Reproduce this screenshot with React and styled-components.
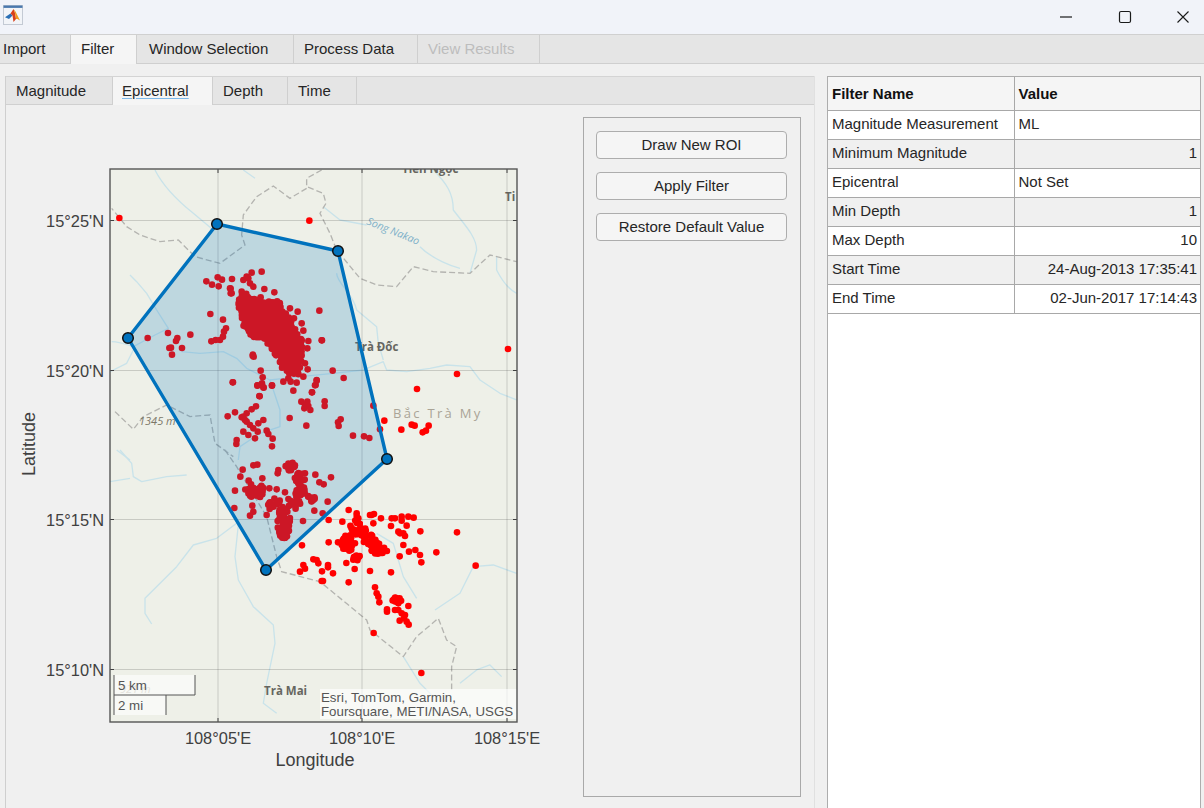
import React from "react";
import styled, { createGlobalStyle } from "styled-components";

const Global = createGlobalStyle`
  html, body { margin: 0; padding: 0; background: #f0f0f0; overflow: hidden; }
  * { box-sizing: border-box; }
  body { font-family: "Liberation Sans", Arial, sans-serif; }
`;

const Window = styled.div`
  width: 1204px; height: 808px; display: flex; flex-direction: column; overflow: hidden;
  background: #f0f0f0; color: #262626; font-size: 15px;
`;
const TitleBar = styled.header`
  height: 35px; flex: none; display: flex; align-items: flex-start; justify-content: space-between;
  background: #f1f3f9; border-bottom: 1px solid #d0d0d0; padding: 5px 0 0 3px;
`;
const Controls = styled.div`display: flex; align-items: center; gap: 16.5px; margin-top: -5px;`;
const ControlButton = styled.div`
  width: 42px; height: 33px; display: flex; align-items: center; justify-content: center; color: #1a1a1a;
`;
const MainTabs = styled.nav`
  height: 29px; flex: none; display: flex; background: #e5e5e5; border-bottom: 1px solid #cfcfcf;
`;
const MainTab = styled.div`
  width: ${p => p.$w}px; height: 29px; padding-left: ${p => p.$pad}px; line-height: 27px; white-space: nowrap;
  background: ${p => (p.$active ? "#f5f5f5" : "#e5e5e5")};
  color: ${p => (p.$disabled ? "#bdbdbd" : "#262626")};
  border-right: 1px solid #cfcfcf;
  border-bottom: ${p => (p.$active ? "none" : "1px solid #cfcfcf")};
`;
const Content = styled.main`
  flex: 1; min-height: 0; display: flex; gap: 12px; padding: 12px 3px 0 5px;
`;
const LeftPanel = styled.section`
  width: 810px; flex: none; display: flex; flex-direction: column;
  border-left: 1px solid #cfcfcf; border-right: 1px solid #e0e0e0;
`;
const SubTabs = styled.div`
  height: 29px; flex: none; display: flex; background: #e5e5e5; border-top: 1px solid #d4d4d4; border-bottom: 1px solid #d0d0d0;
`;
const SubTab = styled.div`
  width: ${p => p.$w}px; height: 28px; padding-left: ${p => p.$pad}px; line-height: 27px;
  background: ${p => (p.$active ? "#f5f5f5" : "#e5e5e5")};
  border-right: 1px solid #cfcfcf;
  border-bottom: ${p => (p.$active ? "none" : "1px solid #d0d0d0")};
`;
const FocusLabel = styled.span`
  text-decoration: underline; text-decoration-color: #7db9ea; text-underline-offset: 2px;
`;
const PanelBody = styled.div`
  flex: 1; min-height: 0; display: flex; justify-content: space-between; padding: 12px 13px 11px 0;
`;
const ChartSvg = styled.svg`display: block; flex: none; width: 577px; height: 680px;`;
const ButtonPanel = styled.aside`
  width: 218px; flex: none; display: flex; flex-direction: column; gap: 13px;
  border: 1px solid #a9a9a9; padding: 13px 13px 0 12px;
`;
const ActionButton = styled.button`
  height: 28px; width: 191px; padding: 0 0 1px; font: 15px "Liberation Sans", Arial, sans-serif; color: #262626;
  background: #f5f5f5; border: 1px solid #adadad; border-radius: 4px;
`;
const TableWrap = styled.section`
  width: 374px; flex: none; height: 100%; background: #fff; border: 1px solid #adadad; border-bottom: none;
`;
const Table = styled.table`
  width: 100%; border-collapse: collapse; table-layout: fixed;
`;
const Th = styled.th`
  height: 33px; padding: 0 4px; text-align: left; font-weight: bold; font-size: 15px; color: #111;
  background: #f5f5f5; border: 1px solid #a8a8a8; border-width: 0 1px 1px 0;
  &:last-child { border-right: none; }
`;
const Td = styled.td`
  height: 29px; padding: 0 3px 2px 4px; white-space: nowrap; font-size: 15px; color: #262626;
  text-align: ${p => (p.$right ? "right" : "left")};
  background: ${p => (p.$alt ? "#f0f0f0" : "#fff")};
  border: 1px solid #a8a8a8; border-width: 0 1px 1px 0;
  &:last-child { border-right: none; }
`;

const Box = styled.rect`fill: none; stroke: #555; stroke-width: 1.4;`;
const MapBg = styled.rect`fill: #eef0e8;`;
const River = styled.path`fill: none; stroke: #c9e3ea; stroke-width: 4; stroke-linejoin: round;`;
const Border = styled.path`fill: none; stroke: #b4b4b0; stroke-width: 4; stroke-dasharray: 18 9;`;
const Grid = styled.line`stroke: rgba(50, 50, 50, 0.2); stroke-width: 1;`;
const Tick = styled.line`stroke: #404040; stroke-width: 1;`;
const TickLabel = styled.text`font: 16.4px "Liberation Sans", Arial, sans-serif; fill: #404040;`;
const AxisLabel = styled.text`font: 18px "Liberation Sans", Arial, sans-serif; fill: #404040; text-anchor: middle;`;
const Place = styled.text`font: bold 11.5px "Open Sans", sans-serif; fill: #666660;`;
const Region = styled.text`font: 13px "Open Sans", sans-serif; letter-spacing: 2.3px; fill: #aaa496;`;
const Elevation = styled.text`font: italic 11px "Open Sans", sans-serif; fill: #7c7868;`;
const FaintElevation = styled(Elevation)`fill: #b5b2a5;`;
const Water = styled.text`font: italic 10.5px "Open Sans", sans-serif; fill: #7fb1c9;`;
const Overlay = styled.rect`fill: rgba(255, 255, 255, ${p => p.$a});`;
const ScaleLine = styled.path`fill: none; stroke: #555; stroke-width: 1;`;
const ScaleText = styled.text`font: 13.3px "Liberation Sans", Arial, sans-serif; fill: #555;`;
const Roi = styled.polygon`fill: rgba(0, 114, 189, 0.2); stroke: #0072bd; stroke-width: 3.4; stroke-linejoin: round;`;
const Handle = styled.circle`fill: #0072bd; stroke: #111; stroke-width: 1.5;`;
const Dot = styled.circle`fill: #ff0000;`;

const z2 = ([x, y]) => [100 + x / 3, 160 + y / 3];
const z3 = ([x, y]) => [100 + x / 3, 450 + y / 3];
const z4 = ([x, y]) => [220 + x / 3, 260 + y / 3];
const rng = (seed) => {
  let a = seed;
  return () => {
    a = (a + 0x6d2b79f5) | 0;
    let t = Math.imul(a ^ (a >>> 15), 1 | a);
    t = (t + Math.imul(t ^ (t >>> 7), 61 | t)) ^ t;
    return ((t ^ (t >>> 14)) >>> 0) / 4294967296;
  };
};
const blob = (map, r, cx, cy, rx, ry, rot, n) => {
  const out = [];
  const c = Math.cos(rot), t = Math.sin(rot);
  for (let i = 0; i < n; i++) {
    const a = r() * Math.PI * 2, d = Math.sqrt(r());
    const u = Math.cos(a) * d * rx, v = Math.sin(a) * d * ry;
    out.push(map([cx + u * c - v * t, cy + u * t + v * c]));
  }
  return out;
};
const inPoly = (poly, x, y) => {
  let hit = false;
  for (let i = 0, j = poly.length - 1; i < poly.length; j = i++) {
    const [xi, yi] = poly[i], [xj, yj] = poly[j];
    if (yi > y !== yj > y && x < ((xj - xi) * (y - yi)) / (yj - yi) + xi) hit = !hit;
  }
  return hit;
};
const fillPoly = (map, r, poly, step, jitter) => {
  const out = [];
  for (let y = 0; y < 900; y += step) {
    for (let x = 0; x < 1300; x += step) {
      const px = x + (r() - 0.5) * jitter, py = y + (r() - 0.5) * jitter;
      if (inPoly(poly, px, py)) out.push(map([px, py]));
    }
  }
  return out;
};

const mainBand = [[50, 130], [72, 95], [118, 122], [180, 122], [205, 170], [248, 240], [245, 300], [242, 345], [195, 342], [170, 290], [135, 240], [100, 235], [70, 200]];
const bandEdge = [[125,35],[95,38],[80,50],[70,60],[85,55],[100,80],[90,70],[30,85],[35,100],[65,95],[133,87],[163,97],[122,112],[210,145],[233,155],[298,152],[222,175],[245,190],[250,212],[265,243],[305,241],[262,265],[255,310],[263,328],[338,332],[122,332],[128,352],[98,287],[112,376],[130,382],[156,376],[38,367],[190,365],[220,392],[250,350],[290,362],[285,376],[276,397],[118,408],[212,365],[230,368],[205,355]];

const upper = [[58,174],[628,182],[1224,567],[1071,642],[951,687],[853,782],[904,809],[935,794],[944,797],[986,797],[978,812],[968,817],[840,808],[143,534],[204,519],[232,534],[228,543],[271,524],[213,563],[208,564],[246,564],[216,584],[319,364],[336,374],[356,379],[353,352],[366,359],[396,357],[392,386],[392,400],[331,462],[369,479],[378,505],[372,515],[369,530],[360,540],[347,540],[334,544],[666,541],[459,584],[461,590],[399,667],[472,677],[486,670],[491,683],[516,677],[731,654],[650,660],[647,675],[636,697],[479,709],[604,725],[622,725],[613,745],[631,750],[674,724],[674,738],[468,739],[455,748],[405,757],[383,769],[430,770],[440,785],[450,795],[460,805],[430,815],[445,825],[465,835],[410,840],[409,852],[473,815],[475,790],[490,780],[500,812],[505,822],[518,836],[516,859],[569,774],[619,797],[722,778],[714,787],[716,798],[759,827],[792,829],[808,834],[820,737],[440,760],[435,780],[425,772],[615,735],[625,738]];
const lower = [[428,59],[460,46],[472,44],[535,60],[533,70],[615,70],[646,74],[693,82],[658,97],[671,103],[421,80],[446,92],[487,85],[405,122],[403,174],[457,167],[460,185],[450,197],[500,195],[508,115],[530,118],[555,127],[609,213],[643,182],[683,155],[668,190],[640,150],[625,140],[746,180],[770,190],[815,195],[875,205],[905,200],[925,200],[941,203],[961,244],[1071,247],[1009,307],[1127,347],[964,337],[960,315],[946,300],[927,305],[910,285],[900,250],[920,227],[873,228],[843,205],[820,220],[686,277],[714,277],[606,286],[899,319],[873,367],[810,363],[764,357],[739,339],[746,397],[669,393],[699,370],[684,345],[666,364],[655,340],[640,328],[610,345],[600,365],[615,356],[825,412],[835,440],[838,457],[861,485],[899,512],[926,524],[915,495],[890,445],[895,460],[925,468],[821,549],[964,669],[686,210],[727,215],[650,330],[684,352],[665,393],[830,430],[861,478],[905,490],[912,505],[920,515],[895,480],[885,480],[810,195],[822,192],[905,212],[885,205],[910,250],[895,245],[915,258],[770,198],[775,205]];

const r = rng(4242);
const dots = [
  ...upper.map(z2),
  ...lower.map(z3),
  ...fillPoly(z4, r, mainBand, 9, 7),
  ...bandEdge.map(z4),
  ...blob(z3, r, 570, 50, 16, 14, 0, 14),
  ...blob(z3, r, 598, 110, 18, 52, 0, 36),
  ...blob(z3, r, 465, 122, 30, 22, 0, 28),
  ...blob(z3, r, 552, 222, 20, 44, 0, 46),
  ...blob(z3, r, 550, 165, 52, 24, 0, 28),
  ...blob(z3, r, 635, 145, 18, 10, 0, 8),
  ...blob(z3, r, 790, 250, 66, 19, 0.75, 50),
  ...blob(z3, r, 745, 280, 20, 26, 0, 30),
  ...blob(z3, r, 765, 320, 14, 14, 0, 10),
  ...blob(z3, r, 838, 303, 26, 13, 0, 16),
  ...blob(z3, r, 890, 450, 15, 9, 0, 12),
];

const riversUpper = [
  "M165,30 C190,80 230,120 280,160 L340,210",
  "M430,30 L465,55",
  "M1000,30 C1040,70 1060,100 1060,150 C1090,190 1130,230 1130,270 L1110,340",
  "M670,140 L720,180 L800,195",
  "M960,260 C1000,300 1060,320 1080,325",
  "M1190,290 L1190,330 C1210,370 1230,390 1250,400",
  "M90,345 L110,365 L140,400 L170,450 L205,505 L165,525 L100,560 C70,550 50,545 35,545",
  "M100,570 L80,610 L30,635",
  "M245,575 L300,580 L370,575 L410,595 L440,625 L510,660 L600,650 L700,640 L790,630 L850,605 L860,630 L920,635 L990,625 L1040,615 L1110,620 L1140,660 L1200,700 L1250,720",
  "M710,340 C710,370 760,400 770,450 L830,500 L835,550 L850,600",
  "M510,660 L540,750 L540,800 L480,820 L420,860 L415,900",
  "M50,870 L90,900",
];
const riversLower = [
  "M60,0 L95,40 L100,80 L125,95 L200,80 L260,75",
  "M30,95 L90,85",
  "M410,220 L350,265 L280,285 L230,350 L135,445 L135,490 L155,522",
  "M415,225 L405,320 L415,390 L460,470 L520,525 L525,580 L500,700 L490,760 L530,790",
  "M830,250 L880,280 L910,380 L950,445",
  "M1005,480 L1080,430 L1120,350 L1180,345 L1250,370",
  "M910,620 L960,700 L1000,740",
  "M1080,700 L1130,660 L1170,645 L1205,680",
];
const bordersUpper = [
  "M665,30 L620,55 L620,80 L670,100 L678,130 L660,160 L690,220 L710,270 L780,355 L830,375 L890,380 L940,320 L1000,335 L1110,340 L1170,285 L1250,305",
  "M620,85 L570,115 L520,78 L470,110 L430,165 L425,225 L435,255 L360,310 L285,290 L235,240 L180,245 L120,225 L80,200 L35,145",
  "M45,755 L100,808 L130,770 L200,735 L270,770 L330,765 L345,850 L400,890",
];
const bordersLower = [
  "M375,0 L410,50 L500,200 L530,320 L545,365 L660,395 L800,510 L810,540 L910,620 L950,560 L1015,505 L1040,570 L1070,590 L1055,650 L1055,720",
];

const xTicks = [[218, "108°05'E"], [362, "108°10'E"], [507, "108°15'E"]];
const yTicks = [[220.5, "15°25'N"], [370.5, "15°20'N"], [519.5, "15°15'N"], [669.5, "15°10'N"]];
const roi = [[128, 338], [217, 224], [338, 251], [387, 459], [266, 570]];

function Chart() {
  return (
    <ChartSvg viewBox="6 117 577 680">
      <defs>
        <clipPath id="plot"><rect x="110" y="169" width="407" height="553" /></clipPath>
      </defs>
      <g clipPath="url(#plot)">
        <MapBg x="110" y="169" width="407" height="553" />
        <g transform="translate(100 160) scale(0.3333)">
          {riversUpper.map(d => <River key={d} d={d} />)}
          {bordersUpper.map(d => <Border key={d} d={d} />)}
        </g>
        <g transform="translate(100 450) scale(0.3333)">
          {riversLower.map(d => <River key={d} d={d} />)}
          {bordersLower.map(d => <Border key={d} d={d} />)}
        </g>
        <Place x="402" y="173">Tiên Ngọc</Place>
        <Place x="505" y="201">Ti</Place>
        <Water transform="translate(366 224) rotate(22)">Song Nakao</Water>
        <Place x="355" y="351">Trà Đốc</Place>
        <Region x="393" y="418">Bắc Trà My</Region>
        <Elevation x="139" y="425">1345 m</Elevation>
        <Place x="264" y="695">Trà Mai</Place>
        <FaintElevation x="120" y="693">921 m</FaintElevation>
        {xTicks.map(([x]) => <Grid key={x} x1={x} x2={x} y1="169" y2="722" />)}
        {yTicks.map(([y]) => <Grid key={y} x1="110" x2="517" y1={y} y2={y} />)}
        {dots.map(([x, y], i) => <Dot key={i} cx={x} cy={y} r="3.3" />)}
        <Overlay x="114" y="675" width="81" height="20" $a="0.6" />
        <Overlay x="114" y="695" width="52" height="20" $a="0.6" />
        <ScaleLine d="M114,675 V715 M114,695 H195 V675 M166,695 V715" />
        <ScaleText x="118" y="690">5 km</ScaleText>
        <ScaleText x="118" y="710">2 mi</ScaleText>
        <Overlay x="320" y="689" width="197" height="30" $a="0.65" />
        <ScaleText x="321" y="702">Esri, TomTom, Garmin,</ScaleText>
        <ScaleText x="321" y="715.5">Foursquare, METI/NASA, USGS</ScaleText>
        <Roi points={roi.map(p => p.join(",")).join(" ")} />
        {roi.map(([x, y]) => <Handle key={x} cx={x} cy={y} r="5.3" />)}
      </g>
      {xTicks.map(([x, t]) => (
        <g key={x}>
          <Tick x1={x} x2={x} y1="169" y2="173" />
          <Tick x1={x} x2={x} y1="718" y2="722" />
          <TickLabel x={x} y="744" textAnchor="middle">{t}</TickLabel>
        </g>
      ))}
      {yTicks.map(([y, t]) => (
        <g key={y}>
          <Tick x1="110" x2="114" y1={y} y2={y} />
          <Tick x1="513" x2="517" y1={y} y2={y} />
          <TickLabel x="104" y={y + 6} textAnchor="end">{t}</TickLabel>
        </g>
      ))}
      <Box x="110" y="169" width="407" height="553" />
      <AxisLabel x="315" y="766">Longitude</AxisLabel>
      <AxisLabel transform="translate(34.5 444) rotate(-90)">Latitude</AxisLabel>
    </ChartSvg>
  );
}

function MatlabIcon() {
  return (
    <svg width="20" height="20" viewBox="0 0 20 20">
      <rect x="0.5" y="0.5" width="19" height="19" fill="#f2f4f8" stroke="#c4cad4" />
      <rect x="0.5" y="0.5" width="19" height="2.4" fill="#4a78ad" />
      <path d="M2 12.2 L7.5 8.6 L9.5 10.5 L6 14Z" fill="#2a6fb5" />
      <path d="M7.5 8.6 L10.5 4 L12 8 L13 14 L10.5 17 L9.5 10.5Z" fill="#d8401c" />
      <path d="M10.5 4 L12.5 6.5 L17 15.5 L14.5 14 L13 14 L12 8Z" fill="#f09a1e" />
    </svg>
  );
}

const rows = [
  ["Magnitude Measurement", "ML", false],
  ["Minimum Magnitude", "1", true],
  ["Epicentral", "Not Set", false],
  ["Min Depth", "1", true],
  ["Max Depth", "10", true],
  ["Start Time", "24-Aug-2013 17:35:41", true],
  ["End Time", "02-Jun-2017 17:14:43", true],
];

const mainTabs = [
  { t: "Import", w: 71, pad: 3 },
  { t: "Filter", w: 66, pad: 10, active: true },
  { t: "Window Selection", w: 157, pad: 12 },
  { t: "Process Data", w: 124, pad: 10 },
  { t: "View Results", w: 122, pad: 10, disabled: true },
];
const subTabs = [
  { t: "Magnitude", w: 107, pad: 10 },
  { t: "Epicentral", w: 100, pad: 9, active: true },
  { t: "Depth", w: 75, pad: 10 },
  { t: "Time", w: 69, pad: 10 },
];

export default function App() {
  return (
    <Window>
      <Global />
      <TitleBar>
        <MatlabIcon />
        <Controls>
          <ControlButton>
            <svg width="14" height="14" viewBox="0 0 14 14"><path d="M1 7H13" stroke="currentColor" strokeWidth="1.2" /></svg>
          </ControlButton>
          <ControlButton>
            <svg width="14" height="14" viewBox="0 0 14 14"><rect x="1.5" y="1.5" width="11" height="11" rx="1.5" fill="none" stroke="currentColor" strokeWidth="1.2" /></svg>
          </ControlButton>
          <ControlButton>
            <svg width="14" height="14" viewBox="0 0 14 14"><path d="M1.5 1.5L12.5 12.5M12.5 1.5L1.5 12.5" stroke="currentColor" strokeWidth="1.1" /></svg>
          </ControlButton>
        </Controls>
      </TitleBar>
      <MainTabs>
        {mainTabs.map(x => (
          <MainTab key={x.t} $w={x.w} $pad={x.pad} $active={x.active} $disabled={x.disabled}>{x.t}</MainTab>
        ))}
      </MainTabs>
      <Content>
        <LeftPanel>
          <SubTabs>
            {subTabs.map(x => (
              <SubTab key={x.t} $w={x.w} $pad={x.pad} $active={x.active}>
                {x.active ? <FocusLabel>{x.t}</FocusLabel> : x.t}
              </SubTab>
            ))}
          </SubTabs>
          <PanelBody>
            <Chart />
            <ButtonPanel>
              <ActionButton>Draw New ROI</ActionButton>
              <ActionButton>Apply Filter</ActionButton>
              <ActionButton>Restore Default Value</ActionButton>
            </ButtonPanel>
          </PanelBody>
        </LeftPanel>
        <TableWrap>
          <Table>
            <colgroup><col width="186" /><col /></colgroup>
            <thead>
              <tr><Th>Filter Name</Th><Th>Value</Th></tr>
            </thead>
            <tbody>
              {rows.map(([n, v, right], i) => (
                <tr key={n}>
                  <Td $alt={i % 2 === 1}>{n}</Td>
                  <Td $alt={i % 2 === 1} $right={right}>{v}</Td>
                </tr>
              ))}
            </tbody>
          </Table>
        </TableWrap>
      </Content>
    </Window>
  );
}
